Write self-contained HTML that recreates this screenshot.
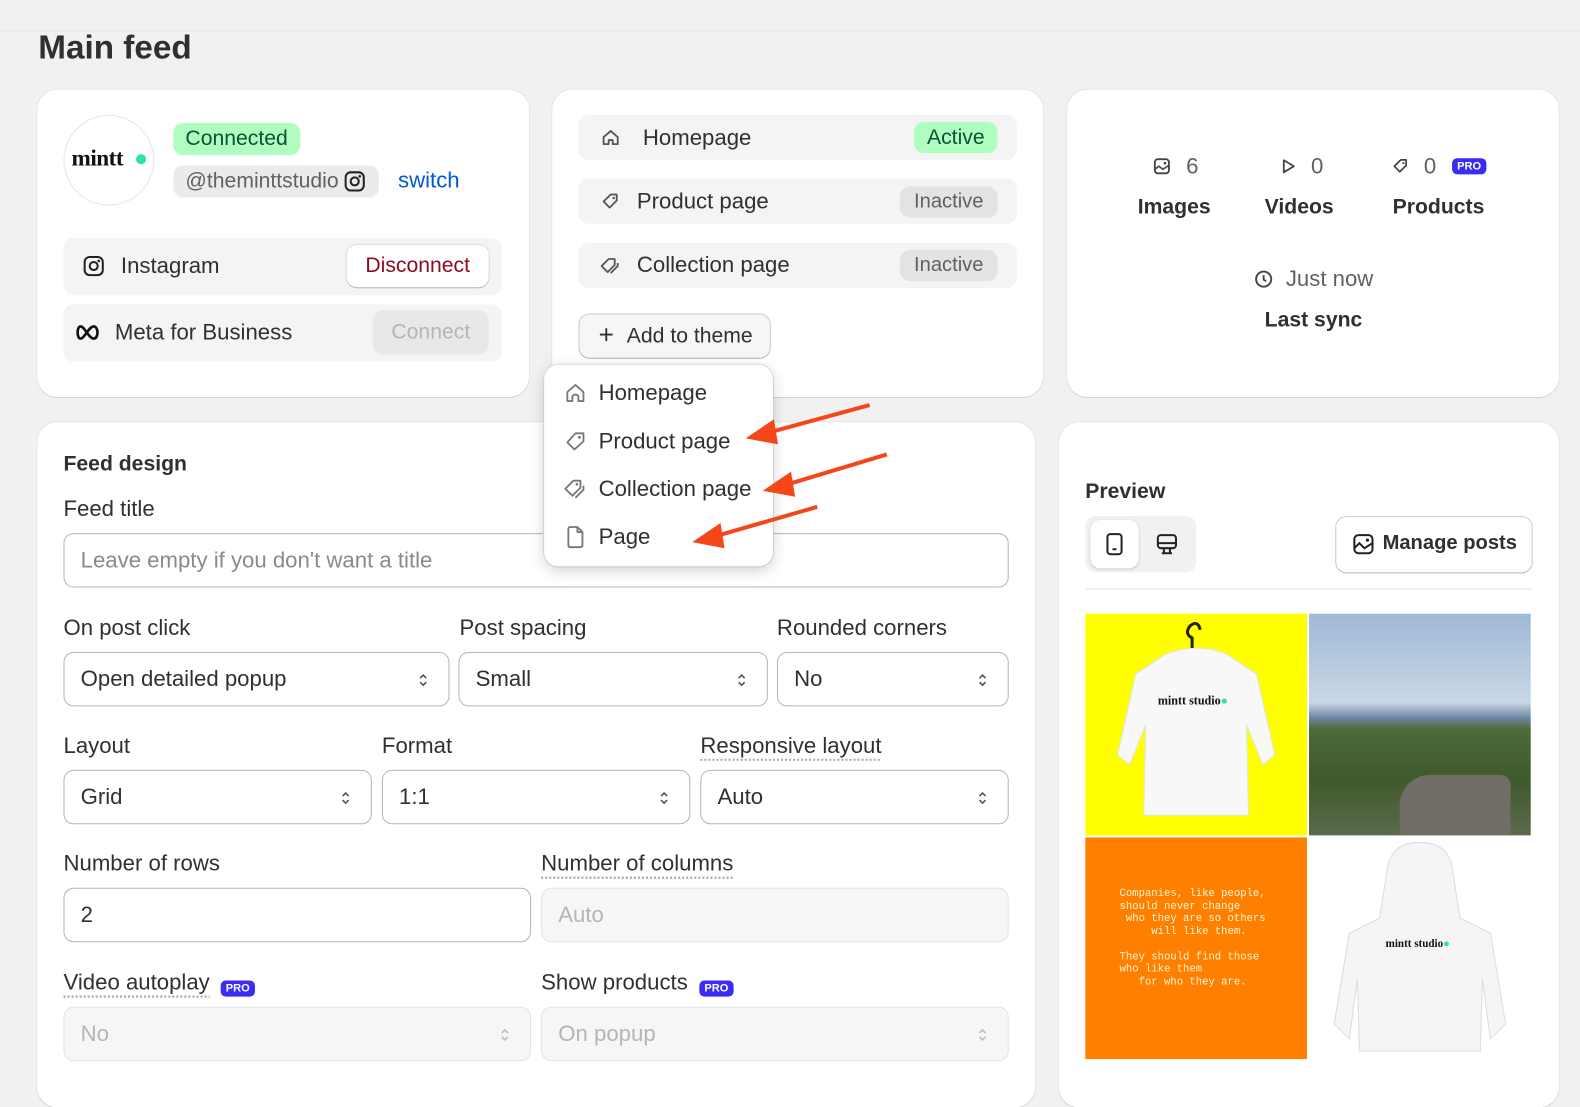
<!DOCTYPE html>
<html><head><meta charset="utf-8"><style>
*{box-sizing:border-box;margin:0;padding:0}
body{width:1580px;height:1072px;overflow:hidden;background:#f1f1f1;font-family:"Liberation Sans",sans-serif;color:#303030;position:relative;font-size:22px}
#w{position:absolute;left:0;top:0;width:1568px;height:1064px;transform:scale(1.0077);transform-origin:0 0}
.a{position:absolute}
.card{position:absolute;background:#fff;border-radius:20px;box-shadow:0 1px 0 #d4d4d4,0 0 0 1px #e6e6e6}
.pill{position:absolute;border-radius:8px}
.row{position:absolute;background:#f4f4f5;border-radius:10px}
.lbl{position:absolute;font-size:22px;color:#303030}
.b{font-weight:bold;font-size:21px}
.inp{position:absolute;border:1px solid #b5b5b5;border-radius:10px;background:#fff;height:54px;font-size:22px;padding:0 16px;line-height:52px}
.dis{background:#f6f6f7;border-color:#e3e3e3;color:#b5b5b5}
.chev{position:absolute;right:20px;top:18px;width:10px;height:18px}
.pro{display:inline-block;background:#3a2bf5;color:#fff;font-size:11px;font-weight:bold;border-radius:5px;padding:2px 5px;vertical-align:3px}
.dot{text-decoration:underline dotted #aaa;text-underline-offset:6px}
svg{position:absolute}
</style></head><body><div id="w">
<div class="a" style="left:0;top:30px;width:1568px;height:1px;background:#e4e4e4"></div>
<div class="a" style="left:38px;top:28px;font-size:33px;font-weight:bold;color:#303030">Main feed</div>

<!-- card 1 -->
<div class="card" style="left:37px;top:89px;width:488px;height:305px">
 <div class="a" style="left:26px;top:25px;width:90px;height:90px;border-radius:50%;border:1px solid #e3e6ea"></div>
 <div class="a" style="left:34px;top:55px;font-family:'Liberation Serif',serif;font-weight:bold;font-size:23px;color:#111;letter-spacing:-0.5px">mintt</div>
 <div class="a" style="left:98px;top:64px;width:10px;height:10px;border-radius:50%;background:#2ee59d"></div>
 <div class="pill" style="left:135px;top:33px;width:126px;height:32px;background:#affebf;border-radius:10px;color:#0c5132;font-size:21px;line-height:32px;padding-left:12px">Connected</div>
 <div class="pill" style="left:135px;top:75px;width:204px;height:32px;background:#ebebeb;border-radius:10px;color:#616161;font-size:21px;line-height:32px;padding-left:12px;white-space:nowrap">@theminttstudio</div>
 <svg style="left:304px;top:80px" width="22" height="22" viewBox="0 0 22 22"><rect x="2" y="2" width="18" height="18" rx="5" fill="none" stroke="#222" stroke-width="2"/><circle cx="11" cy="11" r="4" fill="none" stroke="#222" stroke-width="2"/><circle cx="16" cy="6" r="1.3" fill="#222"/></svg>
 <div class="a" style="left:358px;top:77px;color:#005bd3;font-size:22px">switch</div>
 <div class="row" style="left:26px;top:147px;width:435px;height:57px"></div>
 <svg style="left:45px;top:164px" width="22" height="22" viewBox="0 0 22 22"><rect x="2" y="2" width="18" height="18" rx="5" fill="none" stroke="#222" stroke-width="2"/><circle cx="11" cy="11" r="4" fill="none" stroke="#222" stroke-width="2"/><circle cx="16" cy="6" r="1.3" fill="#222"/></svg>
 <div class="a" style="left:83px;top:162px">Instagram</div>
 <div class="a" style="left:307px;top:154px;width:141px;height:42px;border-radius:10px;background:#fff;box-shadow:0 1px 0 #b5b5b5,0 0 0 1px #ddd;color:#8e0b21;text-align:center;line-height:42px;font-size:21px">Disconnect</div>
 <div class="row" style="left:26px;top:213px;width:435px;height:57px"></div>
 <svg style="left:37px;top:231px" width="26" height="20" viewBox="0 0 26 20"><path d="M6 4C2 4 2 16 6 16C10 16 14 4 19 4C24 4 24 16 19 16C14 16 10 4 6 4Z" fill="none" stroke="#111" stroke-width="2.6"/></svg>
 <div class="a" style="left:77px;top:228px">Meta for Business</div>
 <div class="a" style="left:333px;top:219px;width:115px;height:44px;border-radius:10px;background:#e8e8e8;color:#b5b5b5;text-align:center;line-height:44px;font-size:21px">Connect</div>
</div>

<!-- card 2 -->
<div class="card" style="left:548px;top:89px;width:487px;height:305px">
 <div class="row" style="left:26px;top:25px;width:435px;height:45px"></div>
 <svg style="left:48px;top:38px" width="20" height="20" viewBox="0 0 20 20"><path d="M3 9L10 3L17 9V16H12V12H8V16H3Z" fill="none" stroke="#555" stroke-width="1.8" stroke-linejoin="round"/></svg>
 <div class="a" style="left:90px;top:35px">Homepage</div>
 <div class="pill" style="left:359px;top:32px;width:83px;height:31px;background:#affebf;border-radius:10px;color:#0c5132;line-height:31px;text-align:center;font-size:21px">Active</div>
 <div class="row" style="left:26px;top:88px;width:435px;height:45px"></div>
 <svg style="left:48px;top:101px" width="20" height="20" viewBox="0 0 20 20"><path d="M10 3H16V9L9 16L3 10Z" fill="none" stroke="#555" stroke-width="1.8" stroke-linejoin="round"/><circle cx="13" cy="6.5" r="1.2" fill="#555"/></svg>
 <div class="a" style="left:84px;top:98px">Product page</div>
 <div class="pill" style="left:345px;top:96px;width:97px;height:31px;background:#e3e3e3;border-radius:10px;color:#616161;line-height:31px;text-align:center;font-size:20px">Inactive</div>
 <div class="row" style="left:26px;top:152px;width:435px;height:45px"></div>
 <svg style="left:46px;top:165px" width="22" height="20" viewBox="0 0 22 20"><path d="M10 3H16V9L9 16L3 10Z" fill="none" stroke="#555" stroke-width="1.8" stroke-linejoin="round"/><path d="M19 7V10L12 17" fill="none" stroke="#555" stroke-width="1.8"/></svg>
 <div class="a" style="left:84px;top:161px">Collection page</div>
 <div class="pill" style="left:345px;top:159px;width:97px;height:31px;background:#e3e3e3;border-radius:10px;color:#616161;line-height:31px;text-align:center;font-size:20px">Inactive</div>
 <div class="a" style="left:27px;top:223px;width:189px;height:43px;border-radius:10px;background:#f6f6f6;box-shadow:0 1px 0 #b5b5b5,0 0 0 1px #ccc"></div>
 <div class="a" style="left:46px;top:233px;font-size:26px;line-height:20px">+</div>
 <div class="a" style="left:74px;top:233px;font-size:21px">Add to theme</div>
</div>

<!-- card 3 -->
<div class="card" style="left:1059px;top:89px;width:488px;height:305px">
 <svg style="left:85px;top:67px" width="18" height="18" viewBox="0 0 18 18"><rect x="2" y="2" width="14" height="14" rx="3" fill="none" stroke="#444" stroke-width="1.8"/><path d="M2 12L6 9L10 12L16 8" fill="none" stroke="#444" stroke-width="1.6"/><circle cx="12" cy="6" r="1.3" fill="#444"/></svg>
 <div class="a" style="left:118px;top:63px;color:#616161">6</div>
 <div class="a b" style="left:70px;top:105px">Images</div>
 <svg style="left:212px;top:67px" width="16" height="18" viewBox="0 0 16 18"><path d="M3 3L13 9L3 15Z" fill="none" stroke="#444" stroke-width="1.8" stroke-linejoin="round"/></svg>
 <div class="a" style="left:242px;top:63px;color:#616161">0</div>
 <div class="a b" style="left:196px;top:105px">Videos</div>
 <svg style="left:322px;top:67px" width="18" height="18" viewBox="0 0 20 20"><path d="M10 3H16V9L9 16L3 10Z" fill="none" stroke="#444" stroke-width="1.9" stroke-linejoin="round"/><circle cx="13" cy="6.5" r="1.2" fill="#444"/></svg>
 <div class="a" style="left:354px;top:63px;color:#616161">0</div>
 <div class="a" style="left:382px;top:68px;background:#3a2bf5;color:#fff;font-size:11px;font-weight:bold;border-radius:5px;padding:2px 5px">PRO</div>
 <div class="a b" style="left:323px;top:105px">Products</div>
 <svg style="left:185px;top:178px" width="20" height="20" viewBox="0 0 20 20"><circle cx="10" cy="10" r="7.5" fill="none" stroke="#444" stroke-width="1.9"/><path d="M10 6V10.5L12.5 12" fill="none" stroke="#444" stroke-width="1.9"/></svg>
 <div class="a" style="left:217px;top:175px;color:#616161">Just now</div>
 <div class="a b" style="left:196px;top:217px">Last sync</div>
</div>

<!-- card 4 -->
<div class="card" style="left:37px;top:419px;width:990px;height:680px">
 <div class="lbl b" style="left:26px;top:30px">Feed design</div>
 <div class="lbl" style="left:26px;top:73px">Feed title</div>
 <div class="inp" style="left:26px;top:110px;width:938px;color:#8a8a8a">Leave empty if you don't want a title</div>
 <div class="lbl" style="left:26px;top:191px">On post click</div>
 <div class="lbl" style="left:419px;top:191px">Post spacing</div>
 <div class="lbl" style="left:734px;top:191px">Rounded corners</div>
 <div class="inp" style="left:26px;top:228px;width:383px">Open detailed popup<svg class="chev" viewBox="0 0 10 18"><path d="M2 7L5 4L8 7M2 11L5 14L8 11" fill="none" stroke="#555" stroke-width="1.6"/></svg></div>
 <div class="inp" style="left:418px;top:228px;width:307px">Small<svg class="chev" viewBox="0 0 10 18"><path d="M2 7L5 4L8 7M2 11L5 14L8 11" fill="none" stroke="#555" stroke-width="1.6"/></svg></div>
 <div class="inp" style="left:734px;top:228px;width:230px">No<svg class="chev" viewBox="0 0 10 18"><path d="M2 7L5 4L8 7M2 11L5 14L8 11" fill="none" stroke="#555" stroke-width="1.6"/></svg></div>
 <div class="lbl" style="left:26px;top:308px">Layout</div>
 <div class="lbl" style="left:342px;top:308px">Format</div>
 <div class="lbl dot" style="left:658px;top:308px">Responsive layout</div>
 <div class="inp" style="left:26px;top:345px;width:306px">Grid<svg class="chev" viewBox="0 0 10 18"><path d="M2 7L5 4L8 7M2 11L5 14L8 11" fill="none" stroke="#555" stroke-width="1.6"/></svg></div>
 <div class="inp" style="left:342px;top:345px;width:306px">1:1<svg class="chev" viewBox="0 0 10 18"><path d="M2 7L5 4L8 7M2 11L5 14L8 11" fill="none" stroke="#555" stroke-width="1.6"/></svg></div>
 <div class="inp" style="left:658px;top:345px;width:306px">Auto<svg class="chev" viewBox="0 0 10 18"><path d="M2 7L5 4L8 7M2 11L5 14L8 11" fill="none" stroke="#555" stroke-width="1.6"/></svg></div>
 <div class="lbl" style="left:26px;top:425px">Number of rows</div>
 <div class="lbl dot" style="left:500px;top:425px">Number of columns</div>
 <div class="inp" style="left:26px;top:462px;width:464px">2</div>
 <div class="inp dis" style="left:500px;top:462px;width:464px">Auto</div>
 <div class="lbl dot" style="left:26px;top:543px">Video autoplay</div><div class="a" style="left:182px;top:548px"><span class="pro">PRO</span></div>
 <div class="lbl" style="left:500px;top:543px">Show products</div><div class="a" style="left:657px;top:548px"><span class="pro">PRO</span></div>
 <div class="inp dis" style="left:26px;top:580px;width:464px">No<svg class="chev" viewBox="0 0 10 18"><path d="M2 7L5 4L8 7M2 11L5 14L8 11" fill="none" stroke="#bbb" stroke-width="1.6"/></svg></div>
 <div class="inp dis" style="left:500px;top:580px;width:464px">On popup<svg class="chev" viewBox="0 0 10 18"><path d="M2 7L5 4L8 7M2 11L5 14L8 11" fill="none" stroke="#bbb" stroke-width="1.6"/></svg></div>
</div>

<!-- card 5 -->
<div class="card" style="left:1051px;top:419px;width:496px;height:680px">
 <div class="lbl b" style="left:26px;top:57px">Preview</div>
 <div class="a" style="left:26px;top:93px;width:110px;height:56px;border-radius:10px;background:#f1f1f1"></div>
 <div class="a" style="left:31px;top:97px;width:48px;height:48px;border-radius:10px;background:#fff;box-shadow:0 1px 2px #ccc"></div>
 <svg style="left:45px;top:109px" width="20" height="24" viewBox="0 0 20 24"><rect x="3" y="2" width="14" height="20" rx="3" fill="none" stroke="#222" stroke-width="2"/><path d="M8 17H12" stroke="#222" stroke-width="2"/></svg>
 <svg style="left:96px;top:110px" width="22" height="22" viewBox="0 0 22 22"><rect x="2" y="2" width="18" height="13" rx="3" fill="none" stroke="#222" stroke-width="2"/><path d="M2 10H20M8 15V19M14 15V19M6 20H16" stroke="#222" stroke-width="2"/></svg>
 <div class="a" style="left:275px;top:94px;width:194px;height:55px;border-radius:10px;background:#fff;box-shadow:0 1px 0 #b5b5b5,0 0 0 1px #ccc"></div>
 <svg style="left:291px;top:110px" width="22" height="22" viewBox="0 0 22 22"><rect x="2" y="2" width="18" height="18" rx="4" fill="none" stroke="#222" stroke-width="2"/><path d="M2 15L7 10L12 15L20 10" fill="none" stroke="#222" stroke-width="2"/><circle cx="15" cy="7" r="1.6" fill="#222"/></svg>
 <div class="a" style="left:321px;top:109px;font-weight:bold;font-size:20px;color:#303030">Manage posts</div>
 <div class="a" style="left:26px;top:165px;width:443px;height:1px;background:#e3e3e3"></div>
 <!-- images -->
 <div class="a" style="left:26px;top:190px;width:220px;height:220px;background:#ffff00;overflow:hidden">
  <svg style="left:0;top:0" width="220" height="220" viewBox="0 0 220 220"><path d="M80 40Q110 28 140 40L170 60L188 140L176 150L160 110L162 200L58 200L60 110L44 150L32 140L50 60Z" fill="#f8f8f8" stroke="#e2e2e2"/><path d="M106 34V24Q98 20 104 12Q112 6 114 16" fill="none" stroke="#222" stroke-width="3"/></svg>
  <div class="a" style="left:72px;top:79px;font-family:'Liberation Serif',serif;font-weight:bold;font-size:12px;color:#111">mintt studio<span style="color:#2ee59d">●</span></div>
 </div>
 <div class="a" style="left:248px;top:190px;width:220px;height:220px;overflow:hidden;background:linear-gradient(180deg,#9fb8d6 0%,#c9d7e6 40%,#6d86a4 47%,#4d6a3a 52%,#3f5a2a 75%,#5b6a4e 100%)">
  <div class="a" style="left:90px;top:160px;width:110px;height:60px;background:#6f6d66;border-radius:30px 10px 0 0"></div>
 </div>
 <div class="a" style="left:26px;top:412px;width:220px;height:220px;background:#ff8000;color:#fff3d0;font-family:'Liberation Mono',monospace;font-size:10.5px;line-height:12.5px;padding:50px 0 0 34px;white-space:pre">Companies, like people,
should never change
 who they are so others
     will like them.

They should find those
who like them
   for who they are.</div>
 <div class="a" style="left:248px;top:412px;width:220px;height:220px;background:#fff;overflow:hidden">
  <svg style="left:0;top:0" width="220" height="220" viewBox="0 0 220 220"><path d="M78 30Q82 5 110 5Q138 5 142 30L150 80L180 95L195 185L180 200L172 140L170 212L50 212L48 140L40 200L25 185L40 95L70 80Z" fill="#f5f5f5" stroke="#dcdcdc"/></svg>
  <div class="a" style="left:76px;top:100px;font-family:'Liberation Serif',serif;font-weight:bold;font-size:11px;color:#111">mintt studio<span style="color:#2ee59d">●</span></div>
 </div>
</div>

<!-- dropdown -->
<div class="a" style="left:540px;top:362px;width:227px;height:200px;background:#fff;border-radius:14px;box-shadow:0 4px 14px rgba(0,0,0,.18),0 0 0 1px #e3e3e3"></div>
<svg style="left:560px;top:379px" width="22" height="22" viewBox="0 0 22 22"><path d="M3 10L11 3L19 10V19H14V14Q11 11 8 14V19H3Z" fill="none" stroke="#777" stroke-width="1.8" stroke-linejoin="round"/></svg>
<div class="a" style="left:594px;top:377px;color:#303030;font-size:22px">Homepage</div>
<svg style="left:560px;top:427px" width="22" height="22" viewBox="0 0 22 22"><path d="M11 3H19V11L10 19L3 12Z" fill="none" stroke="#777" stroke-width="1.8" stroke-linejoin="round"/><circle cx="15" cy="7" r="1.4" fill="#777"/></svg>
<div class="a" style="left:594px;top:425px;color:#303030;font-size:22px">Product page</div>
<svg style="left:558px;top:474px" width="26" height="24" viewBox="0 0 26 24"><path d="M11 3H18V10L10 18L3 11Z" fill="none" stroke="#777" stroke-width="1.8" stroke-linejoin="round"/><path d="M21 8V12L13 20" fill="none" stroke="#777" stroke-width="1.8"/><circle cx="14.5" cy="6.5" r="1.3" fill="#777"/></svg>
<div class="a" style="left:594px;top:472px;color:#303030;font-size:22px">Collection page</div>
<svg style="left:560px;top:521px" width="22" height="24" viewBox="0 0 22 24"><path d="M4 4Q4 2 6 2H13L18 7V20Q18 22 16 22H6Q4 22 4 20Z M13 2V7H18" fill="none" stroke="#777" stroke-width="1.8" stroke-linejoin="round"/></svg>
<div class="a" style="left:594px;top:520px;color:#303030;font-size:22px">Page</div>

<!-- arrows -->
<svg style="left:680px;top:390px" width="220" height="160" viewBox="680 390 220 160">
 <g stroke="#f5461a" stroke-width="4" fill="#f5461a">
  <line x1="863" y1="402" x2="760" y2="430"/><polygon points="740,435 768,416 772,441" stroke="none"/>
  <line x1="880" y1="451" x2="777" y2="482"/><polygon points="757,487 785,468 789,493" stroke="none"/>
  <line x1="811" y1="503" x2="707" y2="533"/><polygon points="687,538 715,519 719,544" stroke="none"/>
 </g>
</svg>
</div></body></html>
